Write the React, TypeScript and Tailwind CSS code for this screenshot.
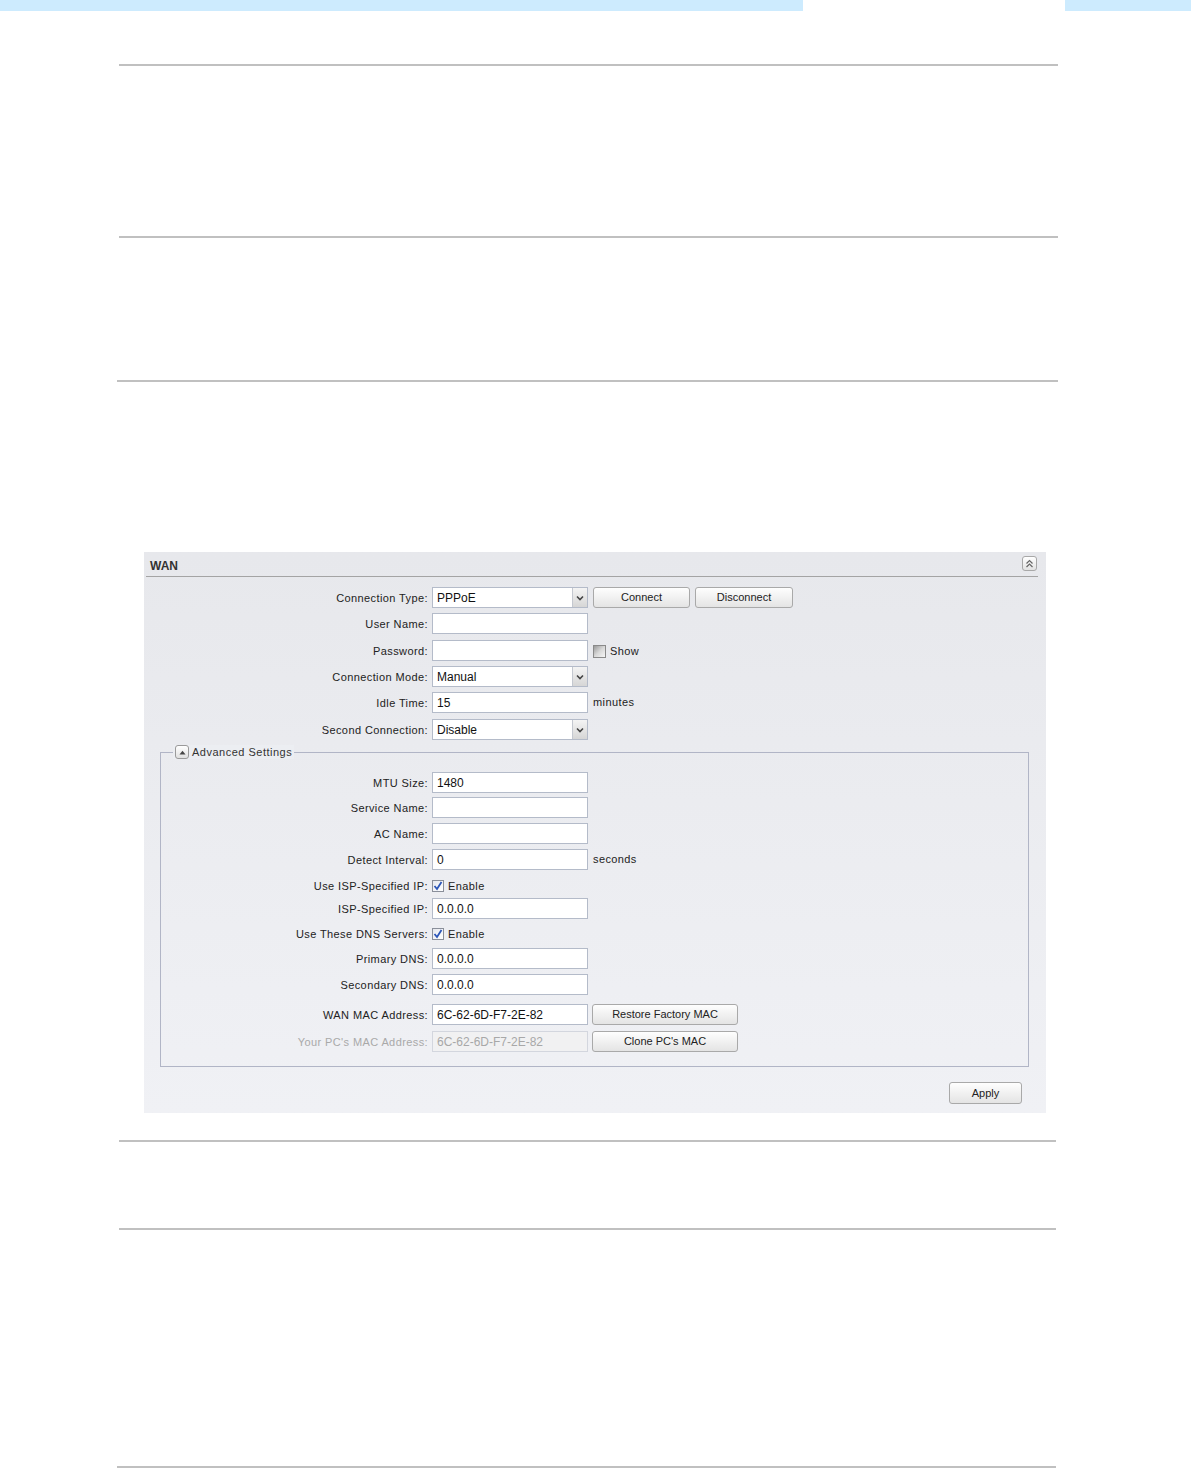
import React from 'react';

const font = { fontFamily: '"Liberation Sans", Arial, sans-serif' };

function Rule({ className }: { className: string }) {
  return <div className={`h-[2px] bg-[#c0c0c0] ${className}`} />;
}

function TextBox({ value = '', disabled = false }: { value?: string; disabled?: boolean }) {
  return (
    <div
      className={`flex h-[21px] w-[156px] items-center border px-[4px] text-[12px] ${
        disabled ? 'border-[#d3d6de] bg-[#f1f1f2] text-[#a8a8a8]' : 'border-[#b4bbc9] bg-white text-[#111]'
      }`}
    >
      {value}
    </div>
  );
}

function SelectBox({ value }: { value: string }) {
  return (
    <div className="flex h-[21px] w-[156px] items-stretch border border-[#b4bbc9] bg-white text-[12px] text-[#111]">
      <div className="flex flex-1 items-center px-[4px]">{value}</div>
      <div className="flex w-[15px] items-center justify-center border-l border-[#c4c8d0] bg-gradient-to-b from-[#f4f4f4] to-[#d6d6d6]">
        <svg width="8" height="6" viewBox="0 0 8 6">
          <path d="M1 1.5 L4 4.5 L7 1.5" fill="none" stroke="#444" strokeWidth="1.6" />
        </svg>
      </div>
    </div>
  );
}

function Btn({ label, className }: { label: string; className: string }) {
  return (
    <div
      className={`flex items-center justify-center rounded-[3px] border border-[#a9a9a9] bg-gradient-to-b from-[#fefefe] to-[#e4e4e4] text-[11px] text-[#222] ${className}`}
    >
      {label}
    </div>
  );
}

function Check({ checked }: { checked: boolean }) {
  if (checked) {
    return (
      <div className="flex h-[12px] w-[12px] items-center justify-center border border-[#8a8f9a] bg-gradient-to-br from-[#e6e8ee] to-[#ffffff]">
        <svg width="10" height="10" viewBox="0 0 10 10">
          <path d="M1.5 5 L4 8 L8.5 1" fill="none" stroke="#2c56b8" strokeWidth="1.8" />
        </svg>
      </div>
    );
  }
  return <div className="h-[13px] w-[13px] border border-[#8a8a8a] bg-gradient-to-br from-[#9a9a9a] via-[#d8d8d8] to-[#f6f6f6]" />;
}

function Label({ text, w, muted = false }: { text: string; w: string; muted?: boolean }) {
  return (
    <div className={`${w} shrink-0 pr-[4px] text-right text-[11px] leading-[14px] tracking-[0.4px] ${muted ? 'text-[#a9a9a9]' : 'text-[#222]'}`}>
      {text}
    </div>
  );
}

export default function App() {
  const lw = 'w-[288px]';
  const fw = 'w-[271px]';
  return (
    <div className="min-h-screen bg-white" style={font}>
      <div className="flex h-[11px]">
        <div className="w-[803px] bg-[#cdebfe]" />
        <div className="w-[262px] bg-white" />
        <div className="flex-1 bg-[#cdebfe]" />
      </div>

      <Rule className="ml-[119px] mt-[53px] w-[939px]" />
      <Rule className="ml-[119px] mt-[170px] w-[939px]" />
      <Rule className="ml-[117px] mt-[142px] w-[941px]" />

      <div className="ml-[144px] mt-[170px] h-[561px] w-[902px] bg-gradient-to-b from-[#e7e8ec] to-[#f0f1f5]">
        <div className="ml-[2px] flex h-[25px] w-[892px] items-center justify-between border-b border-[#a4a4a4]">
          <span className="pl-[4px] pt-[4px] text-[12px] font-bold text-[#333]">WAN</span>
          <div className="mb-[2px] mr-[1px] flex h-[15px] w-[15px] items-center justify-center rounded-[3px] border border-[#a8a8a8] bg-gradient-to-b from-white to-[#e2e2e2]">
            <svg width="9" height="9" viewBox="0 0 9 9">
              <path d="M1.5 4.5 L4.5 1.5 L7.5 4.5 M1.5 8 L4.5 5 L7.5 8" fill="none" stroke="#666" strokeWidth="1.2" />
            </svg>
          </div>
        </div>

        <div className="mt-[10px] flex h-[21px] items-center">
          <Label text="Connection Type:" w={lw} />
          <SelectBox value="PPPoE" />
          <Btn label="Connect" className="ml-[5px] h-[21px] w-[97px]" />
          <Btn label="Disconnect" className="ml-[5px] h-[21px] w-[98px]" />
        </div>
        <div className="mt-[5px] flex h-[21px] items-center">
          <Label text="User Name:" w={lw} />
          <TextBox />
        </div>
        <div className="mt-[6px] flex h-[21px] items-center">
          <Label text="Password:" w={lw} />
          <TextBox />
          <div className="ml-[5px] mt-[2px]">
            <Check checked={false} />
          </div>
          <span className="ml-[4px] mt-[2px] text-[11px] tracking-[0.4px] text-[#222]">Show</span>
        </div>
        <div className="mt-[5px] flex h-[21px] items-center">
          <Label text="Connection Mode:" w={lw} />
          <SelectBox value="Manual" />
        </div>
        <div className="mt-[5px] flex h-[21px] items-center">
          <Label text="Idle Time:" w={lw} />
          <TextBox value="15" />
          <span className="ml-[5px] text-[11px] tracking-[0.4px] text-[#222]">minutes</span>
        </div>
        <div className="mt-[6px] flex h-[21px] items-center">
          <Label text="Second Connection:" w={lw} />
          <SelectBox value="Disable" />
        </div>

        <div className="relative ml-[16px] mt-[12px] h-[315px] w-[869px] border border-[#b1b5c6]">
          <div className="absolute left-[12px] top-[-8px] flex items-center bg-[#eceef2] px-[2px]">
            <div className="flex h-[14px] w-[14px] items-center justify-center rounded-[3px] border border-[#9a9a9a] bg-gradient-to-b from-white to-[#e0e0e0]">
              <svg width="7" height="5" viewBox="0 0 7 5">
                <path d="M0.5 4.5 L3.5 0.8 L6.5 4.5 Z" fill="#444" />
              </svg>
            </div>
            <span className="ml-[3px] text-[11px] leading-[14px] tracking-[0.5px] text-[#333]">Advanced Settings</span>
          </div>

          <div className="mt-[19px] flex h-[21px] items-center">
            <Label text="MTU Size:" w={fw} />
            <TextBox value="1480" />
          </div>
          <div className="mt-[4px] flex h-[21px] items-center">
            <Label text="Service Name:" w={fw} />
            <TextBox />
          </div>
          <div className="mt-[5px] flex h-[21px] items-center">
            <Label text="AC Name:" w={fw} />
            <TextBox />
          </div>
          <div className="mt-[5px] flex h-[21px] items-center">
            <Label text="Detect Interval:" w={fw} />
            <TextBox value="0" />
            <span className="ml-[5px] text-[11px] tracking-[0.4px] text-[#222]">seconds</span>
          </div>
          <div className="mt-[9px] flex h-[14px] items-center">
            <Label text="Use ISP-Specified IP:" w={fw} />
            <Check checked />
            <span className="ml-[4px] text-[11px] leading-[14px] tracking-[0.4px] text-[#222]">Enable</span>
          </div>
          <div className="mt-[5px] flex h-[21px] items-center">
            <Label text="ISP-Specified IP:" w={fw} />
            <TextBox value="0.0.0.0" />
          </div>
          <div className="mt-[8px] flex h-[14px] items-center">
            <Label text="Use These DNS Servers:" w={fw} />
            <Check checked />
            <span className="ml-[4px] text-[11px] leading-[14px] tracking-[0.4px] text-[#222]">Enable</span>
          </div>
          <div className="mt-[7px] flex h-[21px] items-center">
            <Label text="Primary DNS:" w={fw} />
            <TextBox value="0.0.0.0" />
          </div>
          <div className="mt-[5px] flex h-[21px] items-center">
            <Label text="Secondary DNS:" w={fw} />
            <TextBox value="0.0.0.0" />
          </div>
          <div className="mt-[9px] flex h-[21px] items-center">
            <Label text="WAN MAC Address:" w={fw} />
            <TextBox value="6C-62-6D-F7-2E-82" />
            <Btn label="Restore Factory MAC" className="ml-[4px] h-[21px] w-[146px]" />
          </div>
          <div className="mt-[6px] flex h-[21px] items-center">
            <Label text="Your PC's MAC Address:" w={fw} muted />
            <TextBox value="6C-62-6D-F7-2E-82" disabled />
            <Btn label="Clone PC's MAC" className="ml-[4px] h-[21px] w-[146px]" />
          </div>
        </div>

        <div className="mt-[15px] flex w-[878px] justify-end">
          <Btn label="Apply" className="h-[22px] w-[73px]" />
        </div>
      </div>

      <Rule className="ml-[119px] mt-[27px] w-[937px]" />
      <Rule className="ml-[119px] mt-[86px] w-[937px]" />
      <Rule className="ml-[117px] mt-[236px] w-[939px]" />
    </div>
  );
}
